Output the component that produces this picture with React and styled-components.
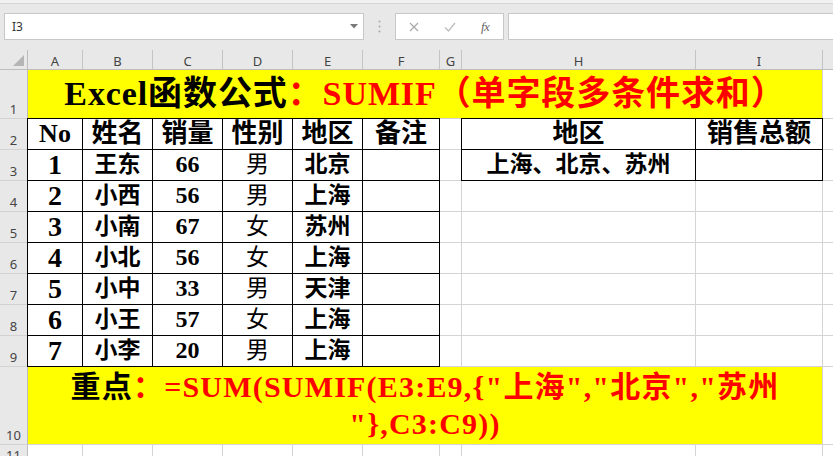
import React from 'react';
import styled, { createGlobalStyle } from 'styled-components';

const GlobalStyle = createGlobalStyle`
  html, body { margin: 0; padding: 0; width: 833px; height: 456px; overflow: hidden; background: #e8e8e8; }
  #root { width: 833px; height: 456px; overflow: hidden; }
`;

const FONT = `"Liberation Serif", "Noto Sans CJK SC", serif`;
const UI = `"Noto Sans", "Liberation Sans", sans-serif`;

const TopEdge = styled.div`
  height: 3px;
  background: #f1f1f1;
  border-bottom: 1px solid #d6d6d6;
`;

const Toolbar = styled.div`
  height: 46px;
  box-sizing: border-box;
  padding: 9px 0 0 4px;
  display: flex;
  align-items: flex-start;
  background: #e8e8e8;
`;

const Box = styled.div`
  height: 27px;
  box-sizing: border-box;
  background: #fff;
  border: 1px solid #c8c8c8;
  display: flex;
  align-items: center;
`;

const NameBox = styled(Box)`
  width: 360px;
  padding: 0 5px 0 7px;
  justify-content: space-between;
  font-family: ${UI};
  font-size: 12px;
  color: #333;
`;

const Dots = styled.div`
  width: 31px;
  height: 27px;
  display: flex;
  align-items: center;
  justify-content: center;
`;

const FxBox = styled(Box)`
  width: 109px;
  margin-right: 4px;
`;

const IconSlot = styled.div`
  width: 36px;
  height: 25px;
  display: flex;
  align-items: center;
  justify-content: center;
`;

const FxText = styled.span`
  font-family: "Liberation Serif", serif;
  font-style: italic;
  font-size: 13px;
  color: #666;
  letter-spacing: -0.5px;
`;

const FormulaBox = styled(Box)`
  flex: 1;
  border-right: none;
`;

const Sheet = styled.div`
  display: grid;
  grid-template-columns: 28px 55px 70px 70px 70px 70px 77px 22px 234px 127px 1fr;
  grid-template-rows: 20px 49px repeat(8, 31px) 78px 20px;
  background: #fff;
`;

const Corner = styled.div`
  background: #e8e8e8;
  box-sizing: border-box;
  border-right: 1px solid #bdbdbd;
  border-bottom: 1px solid #bdbdbd;
  display: flex;
  align-items: flex-end;
  justify-content: flex-end;
  padding: 0 3px 3px 0;
`;

const ColHead = styled.div`
  background: #e8e8e8;
  box-sizing: border-box;
  border-right: ${p => (p.$last ? 'none' : '1px solid #c4c4c4')};
  border-bottom: 1px solid #bdbdbd;
  display: flex;
  align-items: center;
  justify-content: center;
  font-family: ${UI};
  font-size: 13px;
  color: #444;
  padding-top: 2px;
`;

const RowHead = styled.div`
  background: #e8e8e8;
  box-sizing: border-box;
  border-right: 1px solid #bdbdbd;
  border-bottom: 1px solid #d2d2d2;
  display: flex;
  align-items: flex-end;
  justify-content: center;
  font-family: ${UI};
  font-size: 13px;
  line-height: 15px;
  color: #444;
  padding-bottom: 1px;
`;

const shadow = p => {
  const s = [];
  if (p.$left) s.push('-1px 0 0 #000');
  if (p.$top) s.push('0 -1px 0 #000');
  if (p.$left && p.$top) s.push('-1px -1px 0 #000');
  return s.length ? s.join(', ') : 'none';
};

const Cell = styled.div`
  grid-column: span ${p => p.$span || 1};
  box-sizing: border-box;
  border-right: ${p => (p.$noRight ? 'none' : `1px solid ${p.$rc || '#d4d4d4'}`)};
  border-bottom: 1px solid ${p => p.$bc || '#d4d4d4'};
  background: ${p => p.$bg || '#fff'};
  box-shadow: ${shadow};
  display: flex;
  flex-direction: column;
  align-items: center;
  justify-content: center;
  font-family: ${FONT};
  font-size: ${p => p.$size || 23}px;
  font-weight: ${p => (p.$light ? 400 : 700)};
  color: #000;
  white-space: nowrap;
  line-height: ${p => p.$lh || 1.15};
  letter-spacing: ${p => p.$ls || 0}px;
`;

const Red = styled.span`
  color: #ff0000;
`;

const Line = styled.div`
  height: 37px;
  display: flex;
  align-items: center;
`;

const data = [
  [1, '王东', 66, '男', '北京'],
  [2, '小西', 56, '男', '上海'],
  [3, '小南', 67, '女', '苏州'],
  [4, '小北', 56, '女', '上海'],
  [5, '小中', 33, '男', '天津'],
  [6, '小王', 57, '女', '上海'],
  [7, '小李', 20, '男', '上海'],
];

const letters = ['A', 'B', 'C', 'D', 'E', 'F', 'G', 'H', 'I', ''];
const headers = ['No', '姓名', '销量', '性别', '地区', '备注'];
const B = '#000';
const NOTE_1 = '：=SUM(SUMIF(E3:E9,{"上海","北京","苏州';
const NOTE_2 = '"},C3:C9))';

export default function App() {
  const rows = [];

  rows.push(
    <Corner key="corner">
      <svg width="11" height="11" viewBox="0 0 11 11">
        <polygon points="11,0 11,11 0,11" fill="#b5b5b5" />
      </svg>
    </Corner>
  );
  letters.forEach((l, i) => rows.push(<ColHead key={'h' + i} $last={i === letters.length - 1}>{l}</ColHead>));

  rows.push(<RowHead key="r1">1</RowHead>);
  rows.push(
    <Cell key="title" $span={9} $bg="#ffff00" $size={34} $ls={0.9}>
      <div>
        Excel函数公式<Red>：SUMIF（单字段多条件求和）</Red>
      </div>
    </Cell>
  );
  rows.push(<Cell key="j1" $noRight />);

  rows.push(<RowHead key="r2">2</RowHead>);
  headers.forEach((h, i) =>
    rows.push(
      <Cell key={'th' + i} $size={26} $rc={B} $bc={B} $top $left={i === 0}>
        {h}
      </Cell>
    )
  );
  rows.push(<Cell key="g2" />);
  rows.push(<Cell key="h2" $size={26} $rc={B} $bc={B} $top $left>地区</Cell>);
  rows.push(<Cell key="i2" $size={26} $rc={B} $bc={B} $top>销售总额</Cell>);
  rows.push(<Cell key="j2" $noRight />);

  data.forEach((d, idx) => {
    const r = idx + 3;
    rows.push(<RowHead key={'r' + r}>{r}</RowHead>);
    rows.push(<Cell key={'a' + r} $size={28} $rc={B} $bc={B} $left>{d[0]}</Cell>);
    rows.push(<Cell key={'b' + r} $size={23} $rc={B} $bc={B}>{d[1]}</Cell>);
    rows.push(<Cell key={'c' + r} $size={24} $rc={B} $bc={B}>{d[2]}</Cell>);
    rows.push(<Cell key={'d' + r} $size={23} $rc={B} $bc={B} $light>{d[3]}</Cell>);
    rows.push(<Cell key={'e' + r} $size={23} $rc={B} $bc={B}>{d[4]}</Cell>);
    rows.push(<Cell key={'f' + r} $rc={B} $bc={B} />);
    rows.push(<Cell key={'g' + r} />);
    if (r === 3) {
      rows.push(<Cell key="h3" $size={23} $rc={B} $bc={B} $left>上海、北京、苏州</Cell>);
      rows.push(<Cell key="i3" $rc={B} $bc={B} />);
    } else {
      rows.push(<Cell key={'h' + r} />);
      rows.push(<Cell key={'i' + r} />);
    }
    rows.push(<Cell key={'j' + r} $noRight />);
  });

  rows.push(<RowHead key="r10">10</RowHead>);
  rows.push(
    <Cell key="note" $span={9} $bg="#ffff00" $size={30} $ls={1.2} $lh={1}>
      <Line>
        重点<Red>{NOTE_1}</Red>
      </Line>
      <Line>
        <Red>{NOTE_2}</Red>
      </Line>
    </Cell>
  );
  rows.push(<Cell key="j10" $noRight />);

  rows.push(<RowHead key="r11">11</RowHead>);
  letters.forEach((l, i) => rows.push(<Cell key={'x11' + i} $noRight={i === letters.length - 1} />));

  return (
    <>
      <GlobalStyle />
      <TopEdge />
      <Toolbar>
        <NameBox>
          <span>I3</span>
          <svg width="8" height="5" viewBox="0 0 8 5">
            <polygon points="0,0 8,0 4,4.5" fill="#7a7a7a" />
          </svg>
        </NameBox>
        <Dots>
          <svg width="3" height="13" viewBox="0 0 3 13">
            <circle cx="1.5" cy="1.5" r="1" fill="#a8a8a8" />
            <circle cx="1.5" cy="6.5" r="1" fill="#a8a8a8" />
            <circle cx="1.5" cy="11.5" r="1" fill="#a8a8a8" />
          </svg>
        </Dots>
        <FxBox>
          <IconSlot>
            <svg width="10" height="10" viewBox="0 0 10 10">
              <path d="M1 1 L9 9 M9 1 L1 9" stroke="#a9a9a9" strokeWidth="1.2" fill="none" />
            </svg>
          </IconSlot>
          <IconSlot>
            <svg width="12" height="10" viewBox="0 0 12 10">
              <path d="M1 5.5 L4.5 9 L11 1" stroke="#bdbdbd" strokeWidth="1.3" fill="none" />
            </svg>
          </IconSlot>
          <IconSlot>
            <FxText>fx</FxText>
          </IconSlot>
        </FxBox>
        <FormulaBox />
      </Toolbar>
      <Sheet>{rows}</Sheet>
    </>
  );
}
